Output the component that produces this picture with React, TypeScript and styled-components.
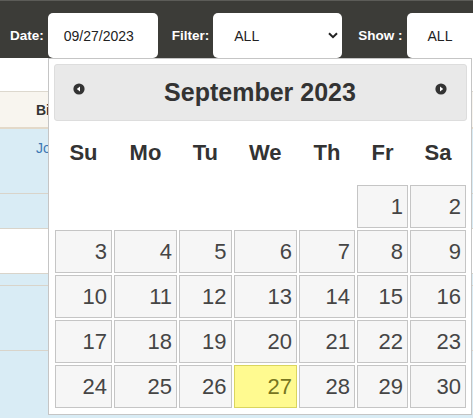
import React from "react";
import styled, { createGlobalStyle } from "styled-components";

const Global = createGlobalStyle`
  html, body { margin: 0; padding: 0; background: #fff; }
  body { font-family: "Liberation Sans", Arial, sans-serif; }
`;

const Page = styled.div`
  position: relative;
  width: 473px;
  height: 418px;
  overflow: hidden;
  background: #fff;
`;

const TopBar = styled.div`
  display: flex;
  height: 58px;
  box-sizing: border-box;
  padding: 12px 0 0 10px;
  background: #3c3c38;
  border-top: 1px solid #5c5c58;
  overflow: hidden;
`;

const Label = styled.span<{ $ml: number }>`
  align-self: center;
  margin: 0 4px 0 ${(p) => p.$ml}px;
  color: #fff;
  font-size: 13.5px;
  font-weight: bold;
  white-space: nowrap;
  flex-shrink: 0;
`;

const Field = styled.div<{ $w: number; $pl: number }>`
  display: flex;
  align-items: center;
  justify-content: space-between;
  flex-shrink: 0;
  width: ${(p) => p.$w}px;
  height: 45px;
  box-sizing: border-box;
  padding: 0 4px 0 ${(p) => p.$pl}px;
  background: #fff;
  border-radius: 5px;
  color: #222;
  font-size: 14px;
`;

const Spacer = styled.div`
  height: 33px;
`;

const TableHead = styled.div`
  display: flex;
  align-items: center;
  height: 38px;
  box-sizing: border-box;
  padding-left: 36px;
  background: #f8f5ef;
  border-top: 1px solid #ddd8ce;
  border-bottom: 2px solid #e3d9c9;
  color: #333;
  font-size: 14px;
  font-weight: bold;
`;

const Row = styled.div<{ $h: number; $white?: boolean }>`
  height: ${(p) => p.$h}px;
  box-sizing: border-box;
  padding: 11px 0 0 36px;
  background: ${(p) => (p.$white ? "#fff" : "#d9ecf5")};
  border-bottom: 1px solid #d9d4ca;
  color: #3d78b3;
  font-size: 14px;
`;

const Popup = styled.div`
  position: absolute;
  left: 48px;
  top: 58px;
  width: 424px;
  box-sizing: border-box;
  padding: 5px 4px 5px 5px;
  background: #fff;
  border: 1px solid #c5c5c5;
  z-index: 2;
`;

const Header = styled.div`
  display: flex;
  align-items: center;
  height: 57px;
  box-sizing: border-box;
  background: #e9e9e9;
  border: 1px solid #dddddd;
  border-radius: 3px;
`;

const NavIcon = styled.svg<{ $side: "l" | "r" }>`
  flex-shrink: 0;
  width: 12px;
  height: 12px;
  margin: 0 ${(p) => (p.$side === "r" ? 19 : 0)}px 7px ${(p) => (p.$side === "l" ? 18 : 0)}px;
`;

const Title = styled.div`
  flex: 1;
  text-align: center;
  color: #333;
  font-size: 25px;
  font-weight: bold;
`;

const Grid = styled.div`
  display: grid;
  grid-template-columns: 59px 65px 54.5px 65.5px 58px 53px 58px;
  grid-template-rows: 63px repeat(5, 45px);
`;

const DayName = styled.div`
  display: flex;
  align-items: center;
  justify-content: center;
  color: #333;
  font-size: 22px;
  font-weight: bold;
`;

const Cell = styled.div`
  padding: 1px;
`;

const Day = styled.a<{ $active?: boolean }>`
  display: block;
  height: 43px;
  box-sizing: border-box;
  padding-right: 4px;
  line-height: 41px;
  text-align: right;
  text-decoration: none;
  font-size: 22px;
  border: 1px solid ${(p) => (p.$active ? "#dad55e" : "#c5c5c5")};
  background: ${(p) => (p.$active ? "#fffa90" : "#f6f6f6")};
  color: ${(p) => (p.$active ? "#777620" : "#454545")};
`;

const Chevron = () => (
  <svg width="10" height="7" viewBox="0 0 10 7">
    <path d="M1 1.2 L5 5.2 L9 1.2" fill="none" stroke="#222" strokeWidth="2" />
  </svg>
);

const dayNames = ["Su", "Mo", "Tu", "We", "Th", "Fr", "Sa"];

export default function App() {
  const cells: (number | null)[] = [null, null, null, null, null];
  for (let d = 1; d <= 30; d++) cells.push(d);

  return (
    <Page>
      <Global />
      <TopBar>
        <Label $ml={0}>Date:</Label>
        <Field $w={110} $pl={16}>09/27/2023</Field>
        <Label $ml={14}>Filter:</Label>
        <Field $w={129} $pl={21}>
          ALL
          <Chevron />
        </Field>
        <Label $ml={16}>Show :</Label>
        <Field $w={90} $pl={21}>ALL</Field>
      </TopBar>
      <Spacer />
      <TableHead>Billing</TableHead>
      <Row $h={65}>John</Row>
      <Row $h={35} />
      <Row $h={45} $white />
      <Row $h={9} />
      <Row $h={65} />
      <Row $h={80} />

      <Popup>
        <Header>
          <NavIcon $side="l" viewBox="0 0 12 12">
            <circle cx="6" cy="6" r="5.6" fill="#333" />
            <polygon points="3.8,6 7,3.6 7,8.4" fill="#fff" />
          </NavIcon>
          <Title>September 2023</Title>
          <NavIcon $side="r" viewBox="0 0 12 12">
            <circle cx="6" cy="6" r="5.6" fill="#333" />
            <polygon points="8.2,6 5,3.6 5,8.4" fill="#fff" />
          </NavIcon>
        </Header>
        <Grid>
          {dayNames.map((n) => (
            <DayName key={n}>{n}</DayName>
          ))}
          {cells.map((d, i) => (
            <Cell key={i}>
              {d !== null && (
                <Day href="#" $active={d === 27}>
                  {d}
                </Day>
              )}
            </Cell>
          ))}
        </Grid>
      </Popup>
    </Page>
  );
}
